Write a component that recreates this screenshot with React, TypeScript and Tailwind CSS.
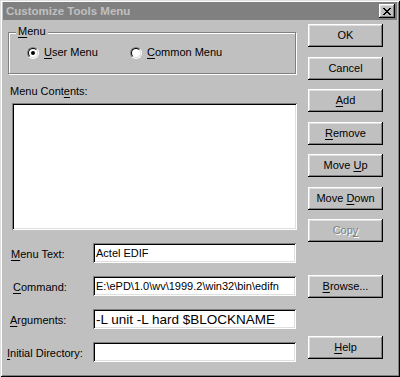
const raised =
  'shadow-[inset_-1px_-1px_#000,inset_1px_1px_#fff,inset_-2px_-2px_#808080,inset_2px_2px_#dfdfdf]'
const sunken =
  'shadow-[inset_1px_1px_#808080,inset_-1px_-1px_#fff,inset_2px_2px_#000,inset_-2px_-2px_#dfdfdf]'

function Key({ children }: { children: string }) {
  return <span className="underline underline-offset-[2px] decoration-1">{children}</span>
}

function Radio({ checked }: { checked?: boolean }) {
  return (
    <div className="h-[12px] w-[12px] shrink-0 rounded-full border border-t-[#808080] border-l-[#808080] border-b-white border-r-white">
      <div className="flex h-full w-full items-center justify-center rounded-full border border-t-black border-l-black border-b-[#dfdfdf] border-r-[#dfdfdf] bg-white">
        {checked && <div className="h-[4px] w-[4px] rounded-full bg-black" />}
      </div>
    </div>
  )
}

function Button({
  children,
  className = '',
  disabled,
}: {
  children: React.ReactNode
  className?: string
  disabled?: boolean
}) {
  return (
    <div
      className={`flex h-[23px] w-[75px] items-center justify-center bg-[#c0c0c0] ${raised} ${
        disabled ? 'text-[#808080] [text-shadow:1px_1px_#fff]' : 'text-black'
      } ${className}`}
    >
      {children}
    </div>
  )
}

function Field({
  label,
  labelPad,
  value,
  big,
}: {
  label: React.ReactNode
  labelPad: string
  value?: string
  big?: boolean
}) {
  return (
    <div className="flex h-[20px] items-center">
      <div className={`w-[87px] pt-[3px] ${labelPad}`}>{label}</div>
      <div
        className={`flex h-[20px] w-[203px] items-center overflow-hidden whitespace-nowrap bg-white pl-[3px] pr-[2px] ${sunken} ${
          big ? 'text-[13.5px]' : 'text-[11px]'
        }`}
      >
        {value}
      </div>
    </div>
  )
}

export default function App() {
  return (
    <div
      className="flex h-[377px] w-[400px] flex-col bg-[#c0c0c0] px-[3px] pt-[2px] text-[11px] leading-[13px] text-black shadow-[inset_1px_1px_#dfdfdf,inset_-1px_-1px_#000,inset_2px_2px_#fff,inset_-2px_-2px_#808080]"
      style={{ fontFamily: '"Liberation Sans", Arial, sans-serif' }}
    >
      {/* title bar */}
      <div className="flex h-[18px] items-center justify-between bg-[#808080] pl-[3px] pr-[2px]">
        <span className="text-[11.5px] font-bold text-[#c0c0c0]">Customize Tools Menu</span>
        <div className={`flex h-[14px] w-[16px] items-center justify-center bg-[#c0c0c0] ${raised}`}>
          <svg width="8" height="7" viewBox="0 0 8 7" shapeRendering="crispEdges">
            <path
              d="M0 0h2v1H0zM6 0h2v1H6zM1 1h2v1H1zM5 1h2v1H5zM2 2h4v1H2zM3 3h2v1H3zM2 4h4v1H2zM1 5h2v1H1zM5 5h2v1H5zM0 6h2v1H0zM6 6h2v1H6z"
              fill="#000"
            />
          </svg>
        </div>
      </div>

      <div className="flex">
        {/* left column */}
        <div className="ml-[3px] flex w-[291px] flex-col">
          <div className="relative ml-[2px] mt-[12px] w-[288px] border border-[#808080] pb-[14px] pt-[13px] shadow-[inset_1px_1px_#fff,1px_1px_#fff]">
            <span className="absolute left-[7px] top-[-8px] bg-[#c0c0c0] px-[2px]">
              <Key>M</Key>enu
            </span>
            <div className="flex items-center pl-[18px]">
              <div className="flex w-[103px] items-center gap-[5px]">
                <Radio checked />
                <span>
                  <Key>U</Key>ser Menu
                </span>
              </div>
              <div className="flex items-center gap-[5px]">
                <Radio />
                <span>
                  <Key>C</Key>ommon Menu
                </span>
              </div>
            </div>
          </div>

          <div className="mt-[11px] pl-[4px]">
            Menu Cont<Key>e</Key>nts:
          </div>
          <div className={`ml-[6px] mt-[5px] h-[127px] w-[285px] bg-white ${sunken}`} />

          <div className="mt-[13px] flex flex-col gap-[13px]">
            <Field label={<><Key>M</Key>enu Text:</>} labelPad="pl-[5px]" value="Actel EDIF" />
            <Field
              label={<><Key>C</Key>ommand:</>}
              labelPad="pl-[7px]"
              value="E:\ePD\1.0\wv\1999.2\win32\bin\edifn"
            />
            <Field
              label={<><Key>A</Key>rguments:</>}
              labelPad="pl-[4px]"
              value="-L unit -L hard $BLOCKNAME"
              big
            />
            <Field label={<><Key>I</Key>nitial Directory:</>} labelPad="pl-[1px]" value="" />
          </div>
        </div>

        {/* right column */}
        <div className="ml-[11px] flex w-[75px] flex-col">
          <Button className="mt-[4px]">OK</Button>
          <Button className="mt-[10px]">Cancel</Button>
          <Button className="mt-[9px]">
            <span>
              <Key>A</Key>dd
            </span>
          </Button>
          <Button className="mt-[10px]">
            <span>
              <Key>R</Key>emove
            </span>
          </Button>
          <Button className="mt-[9px]">
            <span>
              Move <Key>U</Key>p
            </span>
          </Button>
          <Button className="mt-[10px]">
            <span>
              Move <Key>D</Key>own
            </span>
          </Button>
          <Button className="mt-[9px]" disabled>
            <span>
              Cop<Key>y</Key>
            </span>
          </Button>
          <Button className="mt-[33px]">
            <span>
              <Key>B</Key>rowse...
            </span>
          </Button>
          <Button className="mt-[38px]">
            <span>
              <Key>H</Key>elp
            </span>
          </Button>
        </div>
      </div>
    </div>
  )
}
